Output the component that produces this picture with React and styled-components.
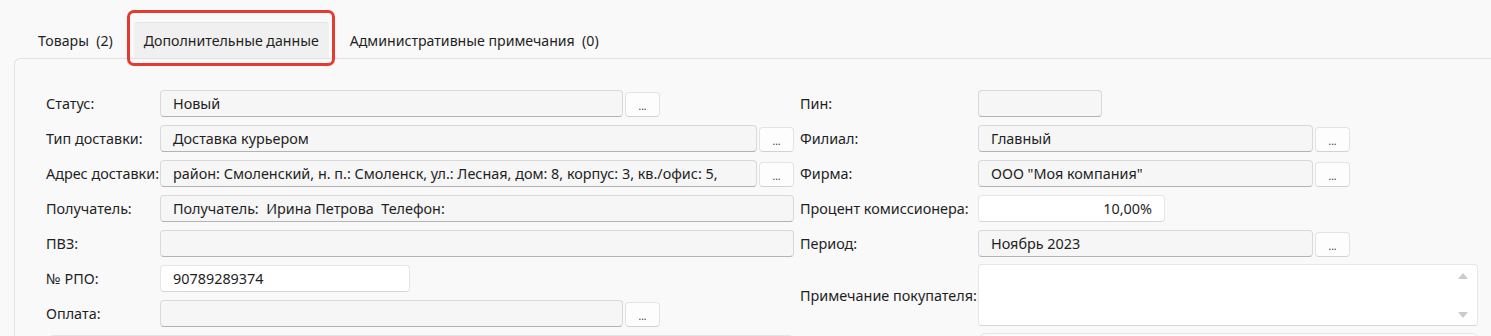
import styled, { createGlobalStyle } from 'styled-components';

const GlobalStyle = createGlobalStyle`
  html, body {
    margin: 0;
    padding: 0;
    background: #f9f9f9;
    overflow: hidden;
  }
  body {
    font-family: "Noto Sans", "Open Sans", sans-serif;
    font-size: 14.4px;
    color: #1f1f1f;
  }
`;

const leftRows = [
  { label: 'Статус:', value: 'Новый', width: 463, button: true },
  { label: 'Тип доставки:', value: 'Доставка курьером', width: 597, button: true },
  {
    label: 'Адрес доставки:',
    value: 'район: Смоленский, н. п.: Смоленск, ул.: Лесная, дом: 8, корпус: 3, кв./офис: 5,',
    width: 597,
    button: true,
  },
  { label: 'Получатель:', value: 'Получатель:  Ирина Петрова  Телефон:', width: 634 },
  { label: 'ПВЗ:', value: '', width: 634 },
  { label: '№ РПО:', value: '90789289374', width: 250, white: true },
  { label: 'Оплата:', value: '', width: 463, button: true },
];

const rightRows = [
  { label: 'Пин:', value: '', width: 124 },
  { label: 'Филиал:', value: 'Главный', width: 335, button: true },
  { label: 'Фирма:', value: 'ООО "Моя компания"', width: 335, button: true },
  { label: 'Процент комиссионера:', value: '10,00%', width: 187, white: true, right: true },
  { label: 'Период:', value: 'Ноябрь 2023', width: 335, button: true },
];

function Field({ row, labelWidth }) {
  return (
    <FieldRow labelWidth={labelWidth}>
      <Label>{row.label}</Label>
      <Controls>
        <Input style={{ width: row.width }} white={row.white} right={row.right}>
          {row.value}
        </Input>
        {row.button && <DotsButton>...</DotsButton>}
      </Controls>
    </FieldRow>
  );
}

export default function App() {
  return (
    <Page>
      <GlobalStyle />
      <TabBar>
        <Tab>Товары&nbsp;&nbsp;(2)</Tab>
        <Tab active>
          Дополнительные данные
          <Highlight />
        </Tab>
        <Tab>Административные примечания&nbsp;&nbsp;(0)</Tab>
      </TabBar>

      <Panel>
        <Columns>
          <Column>
            {leftRows.map((row) => (
              <Field key={row.label} row={row} labelWidth={114} />
            ))}
            <NextRow>
              <NextBox />
            </NextRow>
          </Column>

          <Column>
            {rightRows.map((row) => (
              <Field key={row.label} row={row} labelWidth={178} />
            ))}
            <NoteRow labelWidth={178}>
              <Label>Примечание покупателя:</Label>
              <NoteBox>
                <ScrollBar>
                  <Arrow up />
                  <Arrow />
                </ScrollBar>
              </NoteBox>
            </NoteRow>
            <NextRow indent={178}>
              <NextBox />
            </NextRow>
          </Column>
        </Columns>
      </Panel>
    </Page>
  );
}

//Styled-Component
const Page = styled.div`
  height: 336px;
  overflow: hidden;
  background: #f9f9f9;
`;

const TabBar = styled.div`
  display: flex;
  align-items: stretch;
  gap: 11px;
  height: 36px;
  padding: 22px 0 0 28px;
  font-size: 14.15px;
`;

const Tab = styled.div`
  position: relative;
  display: flex;
  align-items: center;
  padding: 0 10px;
  white-space: nowrap;
  color: #1f1f1f;
  border-radius: 4px 4px 0 0;
  background: ${(p) => (p.active ? '#f0f0f0' : 'transparent')};
  border-top: 1px solid ${(p) => (p.active ? '#e4e4e4' : 'transparent')};
`;

const Highlight = styled.span`
  position: absolute;
  top: -13px;
  left: -7px;
  right: -6px;
  bottom: -8px;
  border: 3px solid #e53a2f;
  border-radius: 7px;
  pointer-events: none;
`;

const Panel = styled.div`
  margin-left: 14px;
  border-top: 1px solid #e2e2e2;
  border-left: 1px solid #e2e2e2;
  border-top-left-radius: 6px;
  padding: 27px 0 0 31px;
  height: 300px;
`;

const Columns = styled.div`
  display: grid;
  grid-template-columns: 748px 678px;
  column-gap: 6px;
`;

const Column = styled.div`
  display: flex;
  flex-direction: column;
`;

const FieldRow = styled.div`
  display: grid;
  grid-template-columns: ${(p) => p.labelWidth}px 1fr;
  align-items: center;
  height: 35px;
`;

const Label = styled.div`
  white-space: nowrap;
  color: #1f1f1f;
`;

const Controls = styled.div`
  display: flex;
  align-items: flex-end;
  gap: 2px;
  height: 27px;
`;

const Input = styled.div`
  box-sizing: border-box;
  height: 27px;
  display: flex;
  align-items: center;
  justify-content: ${(p) => (p.right ? 'flex-end' : 'flex-start')};
  padding: 0 12px;
  white-space: pre;
  overflow: hidden;
  background: ${(p) => (p.white ? '#ffffff' : '#f6f6f6')};
  border: 1px solid ${(p) => (p.white ? '#e6e6e6' : '#d9d9d9')};
  border-bottom-color: ${(p) => (p.white ? '#d6d6d6' : '#b3b3b3')};
  border-radius: 4px;
  color: #1f1f1f;
`;

const DotsButton = styled.div`
  box-sizing: border-box;
  width: 35px;
  height: 25px;
  display: flex;
  align-items: flex-end;
  justify-content: center;
  padding-bottom: 5px;
  background: #fdfdfd;
  border: 1px solid #e3e3e3;
  border-bottom-color: #d2d2d2;
  border-radius: 4px;
  font-size: 10px;
  line-height: 10px;
  color: #333;
`;

const NoteRow = styled.div`
  display: grid;
  grid-template-columns: ${(p) => p.labelWidth}px 500px;
  align-items: center;
  height: 68px;
`;

const NoteBox = styled.div`
  box-sizing: border-box;
  height: 62px;
  display: flex;
  justify-content: flex-end;
  background: #ffffff;
  border: 1px solid #e6e6e6;
  border-bottom-color: #d6d6d6;
  border-radius: 4px;
`;

const ScrollBar = styled.div`
  display: flex;
  flex-direction: column;
  justify-content: space-between;
  align-items: center;
  width: 16px;
  padding: 8px 6px 7px 0;
`;

const Arrow = styled.span`
  width: 0;
  height: 0;
  border-left: 5px solid transparent;
  border-right: 5px solid transparent;
  ${(p) => (p.up ? 'border-bottom: 6px solid #cbcbcb;' : 'border-top: 6px solid #cbcbcb;')}
`;

const NextRow = styled.div`
  padding-top: 4px;
  padding-left: ${(p) => p.indent || 0}px;
`;

const NextBox = styled.div`
  height: 30px;
  margin-left: 2px;
  background: #fbfbfb;
  border: 1px solid #e4e4e4;
  border-radius: 5px;
`;
